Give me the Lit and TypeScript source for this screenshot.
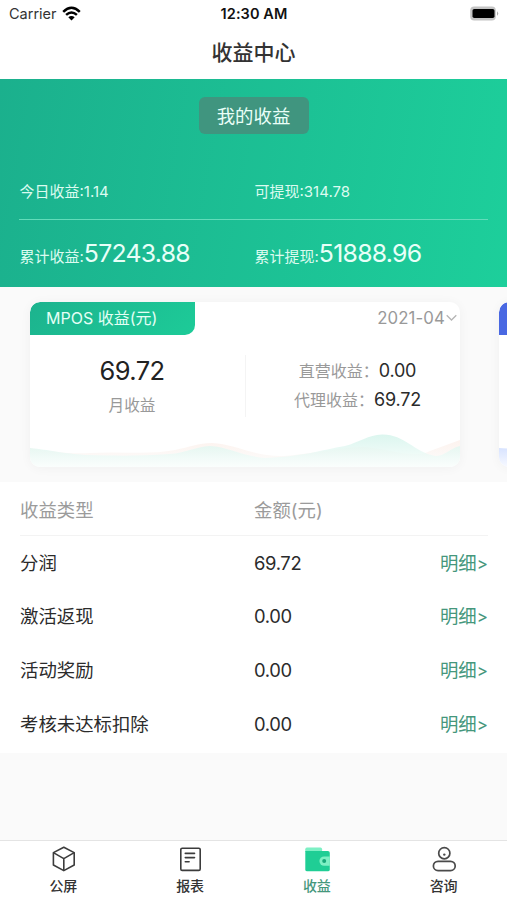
import { LitElement, html, css, svg } from "lit";
import { customElement, state } from "lit/decorators.js";
import { classMap } from "lit/directives/class-map.js";

interface IncomeRow {
  name: string;
  amount: string;
}

const ROWS: IncomeRow[] = [
  { name: "分润", amount: "69.72" },
  { name: "激活返现", amount: "0.00" },
  { name: "活动奖励", amount: "0.00" },
  { name: "考核未达标扣除", amount: "0.00" },
];

const cubeIcon = svg`<g fill="none" stroke="#3c3c3c" stroke-width="1.6" stroke-linejoin="round">
  <path d="M14.800 2.200 25.200 7.600v12.400L14.800 25.600 4.400 20V7.600z"/>
  <path d="M4.400 7.600 14.800 13.600 25.200 7.600M14.800 13.600v12"/></g>`;

const reportIcon = svg`<g fill="none" stroke="#3c3c3c" stroke-width="1.6" stroke-linecap="round">
  <rect x="4.800" y="3.200" width="19.400" height="22.200" rx="1.400"/>
  <path d="M9.300 8.400h9.200M9.300 12.600h9.200M9.300 16.800h3.800"/></g>`;

const walletIcon = svg`
  <path d="M2.300 6V4.200Q2.300 2.600 3.900 2.600h13.600q1.600 0 1.600 1.600V7H2.300z" fill="#7df0c4"/>
  <path d="M2.300 6h22.600q1.900 0 1.900 1.900V24.400q0 1.900-1.900 1.900H4.200Q2.300 26.300 2.300 24.400z" fill="#1fce95"/>
  <path d="M26.800 11.400h-5.700a4.700 4.700 0 0 0 0 9.400h5.700z" fill="#7df0c4"/>
  <circle cx="21.200" cy="16.100" r="2" fill="#17a87a"/>`;

const personIcon = svg`<g fill="none" stroke="#4a4a4a" stroke-width="1.7">
  <circle cx="14.300" cy="8.200" r="5.600"/>
  <rect x="3.400" y="16.300" width="21.800" height="9.300" rx="4.650"/></g>
  <circle cx="14.300" cy="9.600" r="1.200" fill="#4a4a4a"/>`;

const TABS = [
  { label: "公屏", icon: cubeIcon },
  { label: "报表", icon: reportIcon },
  { label: "收益", icon: walletIcon },
  { label: "咨询", icon: personIcon },
];

@customElement("app-root")
export class AppRoot extends LitElement {
  @state() private activeTab = 2;

  static styles = css`
    :host {
      display: flex;
      flex-direction: column;
      width: 507px;
      height: 900px;
      overflow: hidden;
      background: #fafafa;
      color: #2b2b2b;
      font-family: Inter, "Noto Sans CJK SC", sans-serif;
    }
    * { box-sizing: border-box; }
    .status {
      display: grid;
      grid-template-columns: 1fr auto 1fr;
      align-items: center;
      height: 28px;
      padding: 0 8px 0 9px;
      background: #fff;
      color: #111;
      font-size: 14.5px;
      line-height: 28px;
      flex: none;
    }
    .carrier { display: flex; align-items: center; gap: 5px; color: #333; }
    .carrier svg { margin-top: -2px; }
    .clock { font-weight: 600; letter-spacing: 0.1px; }
    .battery { justify-self: end; display: block; margin-top: -2px; }
    .nav {
      height: 51px;
      flex: none;
      background: #fff;
      text-align: center;
      font-size: 21px;
      font-weight: 500;
      line-height: 49px;
      color: #333;
    }
    .hero {
      height: 208px;
      flex: none;
      display: flex;
      flex-direction: column;
      padding: 18px 19px 0;
      background: linear-gradient(100deg, #1bb08d, #1dcf9b);
      color: #dcfbf0;
    }
    .pill {
      align-self: center;
      width: 110px;
      height: 37px;
      border-radius: 6px;
      background: #40957f;
      color: #eafff8;
      font-size: 18.4px;
      line-height: 38px;
      text-align: center;
    }
    .stats { display: grid; grid-template-columns: 235px 1fr; font-size: 15px; white-space: nowrap; }
    .stats > div { padding-left: 0.5px; }
    .stats.today { margin-top: 43px; height: 43px; line-height: 30px; border-bottom: 1.5px solid #62dcba; }
    .stats.total { line-height: 40px; margin-top: 13px; }
    .today .num { font-size: 15px; letter-spacing: 0; }
    .total .num { font-size: 24.8px; letter-spacing: -0.72px; color: #e8fff8; }
    .carousel {
      display: flex;
      gap: 39px;
      height: 195px;
      flex: none;
      padding: 15px 0 0 30px;
      overflow: hidden;
    }
    .card {
      width: 430px;
      height: 165px;
      flex: none;
      display: flex;
      flex-direction: column;
      border-radius: 10px;
      background: #fff;
      box-shadow: 0 1px 12px rgba(0, 0, 0, 0.045);
      overflow: hidden;
    }
    .head { display: flex; justify-content: space-between; height: 33px; flex: none; line-height: 32px; }
    .badge {
      width: 165px;
      padding-left: 16px;
      border-radius: 10px 0 10px 0;
      background: linear-gradient(135deg, #1cb38e, #1dcb98);
      color: #e4fff5;
      font-size: 16px;
      white-space: nowrap;
    }
    .badge.blue { background: #4968e2; }
    .date { display: flex; align-items: center; gap: 1px; padding-right: 3px; color: #999; font-size: 16.8px; letter-spacing: 0.1px; line-height: 30px; height: 31px; }
    .figures { display: grid; grid-template-columns: 215px 1fr; height: 95px; padding-top: 20px; }
    .month { text-align: center; padding-right: 11px; }
    .month-num { font-size: 25.5px; line-height: 32px; letter-spacing: -0.6px; color: #222; }
    .month-label { font-size: 15.7px; line-height: 37px; color: #999; }
    .split { border-left: 1px solid #f4f4f4; height: 62px; padding: 1px 0 0 9px; text-align: center; }
    .line { height: 29px; line-height: 30px; font-size: 16px; color: #999; white-space: nowrap; }
    .line .num { font-size: 18px; color: #2b2b2b; letter-spacing: -0.2px; }
    .wave { display: block; width: 430px; height: 37px; flex: none; }
    .table { height: 271px; flex: none; padding: 0 19px 0 20px; background: #fff; font-size: 18.4px; }
    .row {
      display: grid;
      grid-template-columns: 234px 1fr auto;
      height: 53.8px;
      line-height: 55px;
    }
    .row.title { height: 53.5px; line-height: 56px; color: #9b9b9b; border-bottom: 1px solid #f3f3f3; }
    .row .num { letter-spacing: -0.35px; }
    .detail { color: #45977c; }
    .arrow { letter-spacing: 0; font-size: 17px; }
    .tabs {
      display: grid;
      grid-template-columns: repeat(4, 1fr);
      height: 60px;
      flex: none;
      margin-top: auto;
      background: #fff;
      border-top: 1px solid #e4e4e4;
    }
    .tab { display: flex; flex-direction: column; align-items: center; padding-top: 4px; font-size: 14px; line-height: 21px; font-weight: 500; color: #333; }
    .tab svg { display: block; margin-bottom: 2px; }
    .tab.active { color: #45977c; }
  `;

  private renderStat(label: string, value: string) {
    return html`<div>${label}:<span class="num">${value}</span></div>`;
  }

  render() {
    return html`
      <div class="status">
        <div class="carrier">
          <span>Carrier</span>
          <svg width="19" height="15" viewBox="0 0 19 15" fill="none" stroke="#000" stroke-width="2.5">
            <path d="M1.200 5.800Q9.500-2.200 17.800 5.800M4.100 8.900q5.400-4.900 10.800 0"/>
            <path d="M9.500 14.400 6.300 11.200q3.200-2.600 6.400 0z" fill="#000" stroke="none"/>
          </svg>
        </div>
        <div class="clock">12:30 AM</div>
        <svg class="battery" width="30" height="15" viewBox="0 0 30 15">
          <rect x="1.200" y=".6" width="25.600" height="13.800" rx="4" fill="#c4c4c4"/>
          <rect x="3.500" y="3" width="22" height="9" rx="1.800" fill="#000"/>
          <path d="M28 5.200q2.400 2.300 0 4.600z" fill="#aaa"/>
        </svg>
      </div>
      <div class="nav">收益中心</div>
      <section class="hero">
        <div class="pill">我的收益</div>
        <div class="stats today">${this.renderStat("今日收益", "1.14")}${this.renderStat("可提现", "314.78")}</div>
        <div class="stats total">${this.renderStat("累计收益", "57243.88")}${this.renderStat("累计提现", "51888.96")}</div>
      </section>
      <section class="carousel">
        <article class="card">
          <div class="head">
            <div class="badge">MPOS 收益(元)</div>
            <div class="date">
              <span>2021-04</span>
              <svg width="11" height="8" viewBox="0 0 11 8" fill="none" stroke="#b5b5b5" stroke-width="1.300"><path d="M.7 1.200 5.500 6l4.800-4.800"/></svg>
            </div>
          </div>
          <div class="figures">
            <div class="month">
              <div class="month-num">69.72</div>
              <div class="month-label">月收益</div>
            </div>
            <div class="split">
              <div class="line">直营收益：<span class="num">0.00</span></div>
              <div class="line">代理收益：<span class="num">69.72</span></div>
            </div>
          </div>
          <svg class="wave" viewBox="0 0 430 37">
            <defs>
              <linearGradient id="mint" x1="0" y1="0" x2="0" y2="37" gradientUnits="userSpaceOnUse">
                <stop offset="0" stop-color="#cdf2e8"/><stop offset="1" stop-color="#fafefd"/>
              </linearGradient>
              <linearGradient id="rose" x1="0" y1="0" x2="0" y2="37" gradientUnits="userSpaceOnUse">
                <stop offset="0" stop-color="#fdeee9"/><stop offset="1" stop-color="#fcfefd"/>
              </linearGradient>
            </defs>
            <path d="M0 18C22 22 40 24 60 23C90 21 120 25 145 20C160 17 168 13 182 13C205 14 225 27 254 26C290 23 310 17 335 17C365 20 385 29 400 21L430 10V37H0z" fill="url(#rose)"/>
            <path d="M0 18C20 20 30 23 55 25C90 26 112 26 140 24C155 23 165 17 180 16C198 17 212 26 235 28C270 27 292 20 315 16C330 12 338 5 352 4.500C374 4 384 22 405 26C416 26 420 18 430 16V37H0z" fill="url(#mint)" opacity=".8"/>
          </svg>
        </article>
        <article class="card">
          <div class="head"><div class="badge blue"></div></div>
          <div class="figures"></div>
          <svg class="wave" viewBox="0 0 430 37">
            <defs>
              <linearGradient id="sky" x1="0" y1="0" x2="0" y2="1">
                <stop offset="0" stop-color="#d3e0ff"/><stop offset="1" stop-color="#f7f9ff"/>
              </linearGradient>
            </defs>
            <path d="M0 18Q60 22 120 24T430 15V37H0z" fill="url(#sky)"/>
          </svg>
        </article>
      </section>
      <section class="table">
        <div class="row title"><span>收益类型</span><span>金额(元)</span></div>
        ${ROWS.map(
          (r) => html`<div class="row">
            <span>${r.name}</span><span class="num">${r.amount}</span><span class="detail">明细<span class="arrow">&gt;</span></span>
          </div>`
        )}
      </section>
      <nav class="tabs">
        ${TABS.map(
          (t, i) => html`<div class=${classMap({ tab: true, active: i === this.activeTab })} @click=${() => (this.activeTab = i)}>
            <svg width="28" height="28" viewBox="0 0 28 28">${t.icon}</svg>
            <span>${t.label}</span>
          </div>`
        )}
      </nav>
    `;
  }
}
